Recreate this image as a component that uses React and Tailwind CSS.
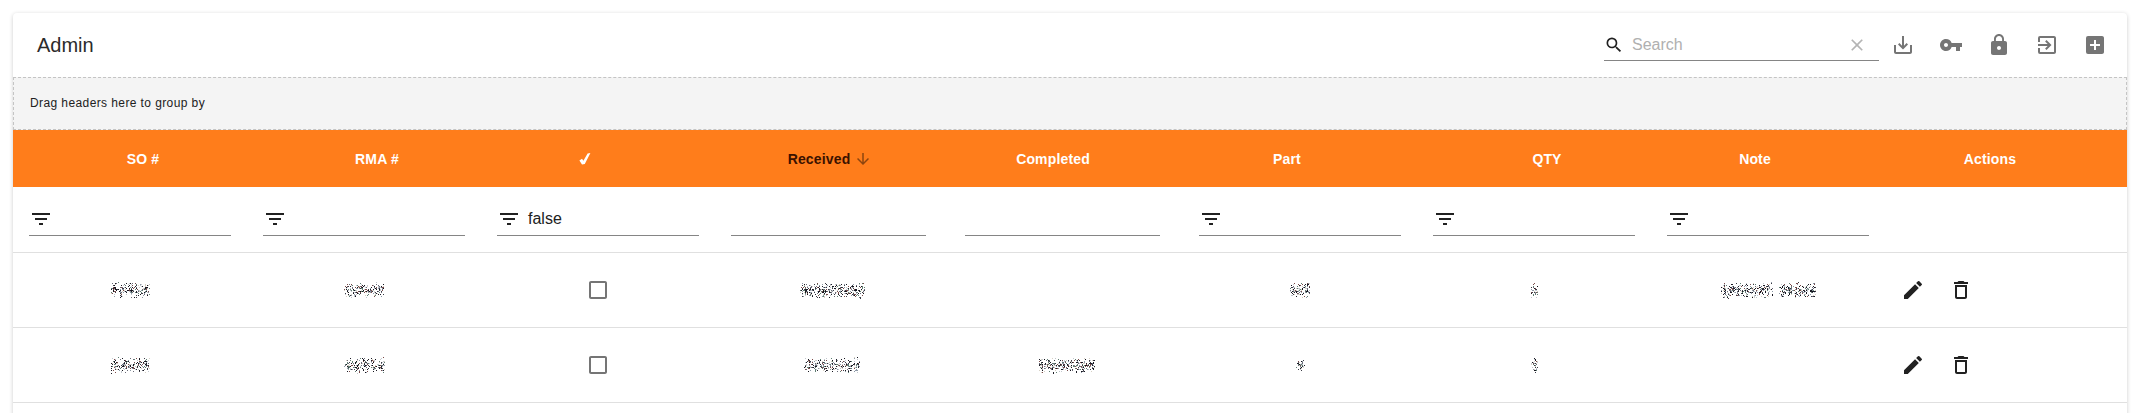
import React from "react";
import {
  MdSaveAlt, MdVpnKey, MdLock, MdExitToApp, MdAddBox, MdSearch, MdClear,
  MdFilterList, MdEdit, MdDeleteOutline, MdArrowDownward, MdCheckBoxOutlineBlank,
} from "react-icons/md";

const INKS = ["#14141c", "#1c1c26", "#3a3a44", "#6b6b78", "#8d99a6", "#c3c8ce", "#7a4a48", "#5f7f72", "#d6d0c4"];

// Obscured cell value: seeded speckles grouped into clumps, one per hidden character.
function Speckle({ width, seed, gap = [] }) {
  let s = seed * 7919 + 17;
  const rnd = () => {
    s = (s * 1103515245 + 12345) % 2147483648;
    return s / 2147483648;
  };
  const dots = [];
  const clumps = Math.max(1, Math.round(width / 7.5));
  for (let c = 0; c < clumps; c++) {
    if (gap.includes(c)) continue;
    const cx = ((c + 0.5) * width) / clumps;
    for (let i = 0; i < 46; i++) {
      const x = Math.round(cx + (rnd() + rnd() - 1) * 5);
      const y = Math.round(9 + (rnd() + rnd() - 1) * 8);
      if (x < 0 || x >= width) continue;
      dots.push([x, y, INKS[Math.floor(rnd() * INKS.length)]]);
    }
  }
  return (
    <svg width={width} height="18" shapeRendering="crispEdges" className="shrink-0">
      {dots.map(([x, y, f], i) => (
        <rect key={i} x={x} y={y} width="1" height="1" fill={f} />
      ))}
    </svg>
  );
}

function CheckGlyph() {
  return (
    <svg width="12" height="14" viewBox="0 0 12 14" className="text-white">
      <path d="M0.4 8.6 L3 6.8 L4.4 8.8 L8.6 1.4 L11.4 1 L5.8 12 L3 12.4 Z" fill="currentColor" />
    </svg>
  );
}

const COLUMNS = [
  { label: "SO #", side: "left", filter: "text" },
  { label: "RMA #", side: "left", filter: "text" },
  { label: <CheckGlyph />, side: "right", filter: "text", value: "false" },
  { label: "Received", side: "right", filter: "date", sorted: true },
  { label: "Completed", side: "right", filter: "date" },
  { label: "Part", side: "right", filter: "text" },
  { label: "QTY", side: "left", filter: "text" },
  { label: "Note", side: "right", filter: "text" },
];

const ROWS = [
  [[40, 1], [40, 2], "box", [65, 3], null, [20, 4], [7, 5], [96, 6, [7]]],
  [[39, 7], [41, 8], "box", [56, 9], [57, 10], [10, 11], [7, 12], null],
];

const GRID = "grid grid-cols-[repeat(8,234px)_1fr]";

function SortSlot({ on }) {
  return <span className="mx-1 flex size-[18px]">{on && <MdArrowDownward size={18} className="text-black/45" />}</span>;
}

export default function App() {
  return (
    <div className="h-[413px] overflow-hidden bg-white px-[13px] pt-[13px] font-['Liberation_Sans',Arial,sans-serif] text-[#212121]">
      <div className="h-[440px] w-[2114px] rounded bg-white shadow-[0_1px_4px_rgba(0,0,0,0.2)]">
        <header className="flex h-16 items-center pr-5 pl-6">
          <h6 className="text-xl text-[#2b2b2b]">Admin</h6>
          <div className="ml-auto flex h-8 w-[275px] items-center border-b border-[#858585]">
            <MdSearch size={20} className="shrink-0" />
            <span className="ml-2 flex-1 text-base text-[#b0b0b0]">Search</span>
            <MdClear size={20} className="mr-3 shrink-0 text-[#b4b4b4]" />
          </div>
          <div className="ml-3 flex gap-6 text-[#757575]">
            <MdSaveAlt size={24} />
            <MdVpnKey size={24} />
            <MdLock size={24} />
            <MdExitToApp size={24} />
            <MdAddBox size={24} />
          </div>
        </header>
        <div className="flex h-[53px] items-center border border-dashed border-[#c4c4c4] bg-[#f4f4f4] pb-0.5 pl-4 text-xs tracking-[0.4px]">
          Drag headers here to group by
        </div>
        <div className={`${GRID} h-[57px] items-center bg-[#ff7d1b] text-sm font-bold tracking-[0.15px] text-white`}>
          {COLUMNS.map((c, i) => (
            <div key={i} className="flex items-center justify-center">
              {c.side === "left" && <SortSlot />}
              <span className={c.sorted ? "text-[#3a1200]" : "text-white"}>{c.label}</span>
              {c.side === "right" && <SortSlot on={c.sorted} />}
            </div>
          ))}
          <div className="pr-8 text-center">Actions</div>
        </div>
        <div className={`${GRID} h-[66px] items-center border-b border-[#e0e0e0]`}>
          {COLUMNS.map((c, i) => (
            <div key={i} className="px-4">
              <div className={`flex h-8 items-center border-b border-[#858585] ${c.filter === "date" ? "w-[195px]" : "w-[202px]"}`}>
                {c.filter === "text" && <MdFilterList size={24} />}
                {c.value && <span className="ml-[7px] text-base">{c.value}</span>}
              </div>
            </div>
          ))}
        </div>
        {ROWS.map((row, r) => (
          <div key={r} className={`${GRID} h-[75px] items-center border-b border-[#e0e0e0]`}>
            {row.map((v, i) => (
              <div key={i} className="flex items-center justify-center">
                {v === "box" && <MdCheckBoxOutlineBlank size={24} className="text-[#757575]" />}
                {Array.isArray(v) && <Speckle width={v[0]} seed={v[1]} gap={v[2]} />}
              </div>
            ))}
            <div className="flex gap-6 pl-4">
              <MdEdit size={24} />
              <MdDeleteOutline size={24} />
            </div>
          </div>
        ))}
      </div>
    </div>
  );
}
